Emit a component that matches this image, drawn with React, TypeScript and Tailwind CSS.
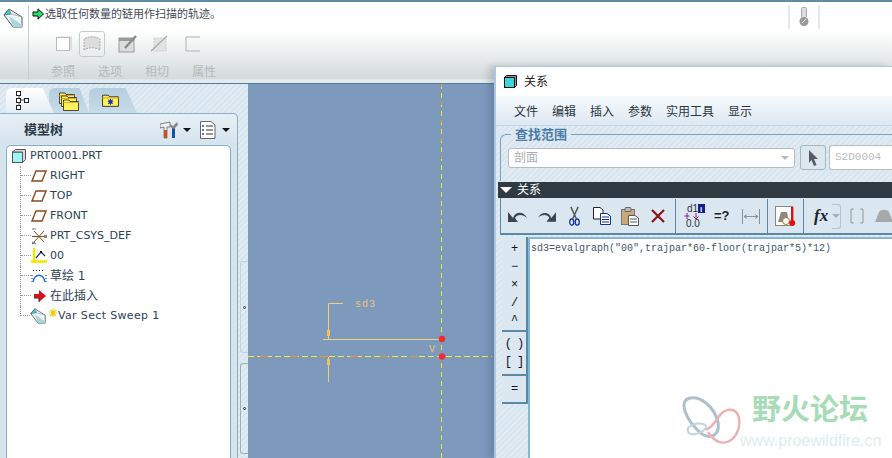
import React from 'react'

const cjk = "font-['Liberation_Sans','Noto_Sans_CJK_SC',sans-serif]"
const hatch = 'bg-[repeating-linear-gradient(135deg,#e0ebf3_0,#e0ebf3_2px,#d8e5ef_2px,#d8e5ef_4px)]'

const SweepIcon = ({ size = 20 }: { size?: number }) => (
  <svg width={size} height={size} viewBox="0 0 20 20">
    <path d="M1 7 L6 1 L19 9 V19 H10 Z" fill="#eef3f4" stroke="#3c4a50" strokeWidth="0.9" />
    <path d="M10 19 L6 8 L19 17 V19 Z" fill="#a6d6d8" />
    <path d="M1 7 L6 1 L8 6 Z" fill="#35d0d0" stroke="#3c4a50" strokeWidth="0.6" />
    <path d="M6 1 L8 6 L19 9" fill="none" stroke="#9aaab0" strokeWidth="0.8" />
  </svg>
)

const PlaneIcon = () => (
  <svg width="16" height="12" viewBox="0 0 16 12">
    <path d="M5 1 H15 L11 11 H1 Z" fill="none" stroke="#8a4a1e" strokeWidth="1.4" />
  </svg>
)

const CsysIcon = () => (
  <svg width="16" height="17" viewBox="0 0 16 17">
    <path d="M3 3 L13 14 M13 3 L3 14 M1 8.5 H13" stroke="#8a4a1e" strokeWidth="1" />
    <path d="M1 1 L5 1 M1 14 L5 16 M1 16 L4 14" stroke="#777" strokeWidth="1.1" />
    <rect x="13" y="7" width="3" height="3" fill="#888" />
  </svg>
)

const GraphIcon = () => (
  <svg width="16" height="16" viewBox="0 0 16 16">
    <path d="M3 0 V15 M0 13.5 H16" stroke="#f2e600" strokeWidth="2.4" />
    <path d="M5 10 L10 4 L14 8" fill="none" stroke="#15308e" strokeWidth="1.2" />
    <rect x="9" y="3" width="2" height="2" fill="#111" />
  </svg>
)

const SketchIcon = () => (
  <svg width="16" height="15" viewBox="0 0 16 15">
    <path d="M2 1.5 H14 M1 6 V14 M15 6 V14" stroke="#222" strokeWidth="1" strokeDasharray="1 2" />
    <path d="M2 13 C4 4 12 4 14 13" fill="none" stroke="#1673e6" strokeWidth="1.3" />
  </svg>
)

const InsertIcon = () => (
  <svg width="16" height="14" viewBox="0 0 16 14">
    <path d="M3 5 H8 V1 L15 7 L8 13 V9 H3 Z" fill="#d9101a" />
    <path d="M3 9 H8 V13" fill="none" stroke="#333" strokeWidth="1" />
  </svg>
)

const Row = ({ icon, label, last, className }: { icon: React.ReactNode; label: React.ReactNode; last?: boolean; className?: string }) => (
  <li className={`ml-[8px] flex h-5 items-center ${last ? '' : 'border-l border-dotted border-[#9a9a9a]'}`}>
    <span className={`mb-[10px] h-[10px] w-[10px] border-b border-dotted border-[#9a9a9a] ${last ? 'border-l' : ''}`} />
    <span className="flex w-[19px] items-center">{icon}</span>
    <span className={`whitespace-nowrap ${className ?? ''}`}>{label}</span>
  </li>
)

const TopBar = () => (
  <header className="flex h-[84px] border-t-2 border-b border-t-[#5f8ca3] border-b-[#4f7f96] bg-[linear-gradient(#ffffff_0,#ffffff_35%,#d3dada_95%,#e4ebee_96%)]">
    <div className="w-[28px] pt-[6px] pl-[3px]"><SweepIcon /></div>
    <div className="my-[3px] w-px bg-[#c8cfd0]" />
    <div className="flex flex-1 flex-col pl-[3px]">
      <div className="flex h-[24px] items-center gap-[1px]">
        <svg width="12" height="12" viewBox="0 0 12 12">
          <path d="M1 4 H6 V0.8 L11.5 6 L6 11.2 V8 H1 Z" fill="#22e070" stroke="#111" strokeWidth="1" />
        </svg>
        <span className="text-[11px] text-[#3f4a55]">选取任何数量的链用作扫描的轨迹。</span>
      </div>
      <div className="mt-[5px] flex h-[26px] items-center">
        <svg width="18" height="18" viewBox="0 0 18 18" className="ml-[23px]"><rect x="3" y="1.5" width="14" height="14" fill="#ddd" /><rect x="1.5" y="2.5" width="13" height="13" fill="#fff" stroke="#bbb" /></svg>
        <div className="ml-[6px] flex h-[26px] w-[26px] items-center justify-center rounded-[3px] border border-[#c4cbcd]">
          <svg width="18" height="16" viewBox="0 0 18 16"><path d="M1 14 V3 C6 0 12 0 17 3 V14 C12 11 6 11 1 14 Z" fill="#ddd" stroke="#aaa" strokeDasharray="2 1" /></svg>
        </div>
        <svg width="20" height="18" viewBox="0 0 20 18" className="ml-[13px]"><rect x="1" y="3" width="15" height="14" fill="#ddd" stroke="#999" /><rect x="1" y="3" width="15" height="3" fill="#999" /><path d="M7 13 L18 1" stroke="#8a8a8a" strokeWidth="2.4" /></svg>
        <svg width="18" height="18" viewBox="0 0 18 18" className="ml-[12px]"><rect x="4" y="3" width="12" height="13" fill="#e2e2e2" stroke="#ccc" strokeDasharray="2 1" /><path d="M1 16 L17 1" stroke="#a8a8a8" strokeWidth="1.2" /></svg>
        <svg width="16" height="16" viewBox="0 0 16 16" className="ml-[17px]"><path d="M15 1 H1 V15 H15" fill="none" stroke="#b0b0b0" /></svg>
      </div>
      <div className="mt-[7px] flex gap-[23px] pl-[19px] text-[12px] leading-[16px] text-[#b6babb]">
        <span>参照</span><span>选项</span><span>相切</span><span>属性</span>
      </div>
    </div>
    <div className="mt-[3px] mr-[72px] flex h-[24px] w-[32px] items-center justify-center border-x-2 border-[#e6e9e9]">
      <svg width="10" height="20" viewBox="0 0 10 20"><rect x="2.5" y="0.5" width="5" height="10" rx="1" fill="#ddd" stroke="#aaa" /><circle cx="5" cy="14.5" r="4.5" fill="#999" /><path d="M3 16 L7 12" stroke="#ddd" /></svg>
    </div>
  </header>
)

const Tab = ({ active, children, className }: { active?: boolean; children: React.ReactNode; className: string }) => (
  <div className={`flex h-[25px] items-center justify-center rounded-t-[6px] [clip-path:polygon(0_0,76%_0,100%_100%,0_100%)] ${active ? 'bg-[linear-gradient(#ffffff,#e4edf3)]' : 'bg-[linear-gradient(#b4cee0,#c8dbe8)]'} ${className}`}>
    {children}
  </div>
)

const Folder = ({ x = 0, y = 0, star }: { x?: number; y?: number; star?: boolean }) => (
  <g transform={`translate(${x} ${y})`}>
    <path d="M0.5 2 H6 L7 3.5 H15.5 V12.5 H0.5 Z" fill="#fff15a" stroke="#222" strokeWidth="0.8" />
    <path d="M0.5 4.5 H15.5" stroke="#e0b020" />
    {star && <path d="M8 5.5 V11 M5.5 8.2 H10.5 M6 6.2 L10 10.2 M10 6.2 L6 10.2" stroke="#1030c8" strokeWidth="1" />}
  </g>
)

const LeftPanel = () => (
  <aside className={`flex w-[248px] flex-col ${hatch}`}>
    <div className="flex pt-[4px] pl-[6px]">
      <Tab active className="relative z-10 w-[48px]">
        <svg width="14" height="19" viewBox="0 0 14 19" className="mr-[14px]">
          <path d="M3 2 V16 M3 9 H11" stroke="#555" />
          <rect x="0.5" y="0.5" width="4" height="4" fill="#fff" stroke="#222" /><rect x="0.5" y="7.5" width="4" height="4" fill="#fff" stroke="#222" /><rect x="0.5" y="14.5" width="4" height="4" fill="#fff" stroke="#222" /><rect x="8.5" y="7.5" width="4" height="4" fill="#fff" stroke="#222" />
        </svg>
      </Tab>
      <Tab className="-ml-[5px] w-[40px]">
        <svg width="20" height="20" viewBox="0 0 20 20"><Folder x={0} y={0} /><Folder x={2} y={3} /><Folder x={4} y={7} /></svg>
      </Tab>
      <Tab className="w-[48px]">
        <svg width="17" height="15" viewBox="0 0 16 14" className="mr-[5px]"><Folder star /></svg>
      </Tab>
    </div>
    <div className="flex flex-1 pr-[10px]">
      <div className="flex flex-1 flex-col rounded-tr-[5px] border-t border-r border-[#8fb0c2] bg-[linear-gradient(#e6eff5,#d6e4ee_30px)] px-[6px]">
        <div className="flex h-[31px] shrink-0 items-center">
          <span className="ml-[18px] text-[13px] font-bold text-[#2e3a44]">模型树</span>
          <svg width="19" height="18" viewBox="0 0 19 18" className="ml-[97px]">
            <path d="M0 3 L10 1 V6 H7 V17 H4 V6 L0 7 Z" fill="#f0f0f0" stroke="#555" strokeWidth="0.7" /><rect x="4" y="9" width="3" height="8" fill="#d05018" />
            <rect x="12" y="7" width="3" height="10" fill="#1a4fb0" /><path d="M10 3 L13 5 L17 1 L18 4 L14 8 L10 6 Z" fill="#888" />
          </svg>
          <span className="ml-[4px] h-0 w-0 border-x-[4px] border-t-[4px] border-x-transparent border-t-[#111]" />
          <svg width="16" height="18" viewBox="0 0 16 18" className="ml-[9px]">
            <path d="M0.5 0.5 H11 L15 4 V17.5 H0.5 Z" fill="#fff" stroke="#667" />
            <path d="M6 5 H13 M6 9 H13 M6 13 H13" stroke="#333" /><path d="M2 5 H4 M2 9 H4 M2 13 H4" stroke="#1a4fb0" strokeWidth="1.6" />
          </svg>
          <span className="ml-[6px] h-0 w-0 border-x-[4px] border-t-[4px] border-x-transparent border-t-[#111]" />
        </div>
        <div className="flex-1 rounded-t-[5px] border border-b-0 border-[#86aec4] bg-white pl-[5px] font-['DejaVu_Sans','Noto_Sans_CJK_SC',sans-serif] text-[11px] text-[#2b4257]">
          <ul>
            <li className="flex h-5 items-center">
              <svg width="14" height="14" viewBox="0 0 14 14" className="mr-[4px]"><rect x="0.5" y="3" width="10" height="10.5" fill="#9ff6f6" stroke="#555" /><path d="M0.5 3 L3.5 0.5 H13.5 V10.5 L10.5 13.5 V3 Z" fill="#d9dde0" stroke="#555" /></svg>
              PRT0001.PRT
            </li>
            <Row icon={<PlaneIcon />} label="RIGHT" />
            <Row icon={<PlaneIcon />} label="TOP" />
            <Row icon={<PlaneIcon />} label="FRONT" />
            <Row icon={<CsysIcon />} label="PRT_CSYS_DEF" />
            <Row icon={<GraphIcon />} label="00" />
            <Row icon={<SketchIcon />} label="草绘 1" className="text-[12px]" />
            <Row icon={<InsertIcon />} label="在此插入" className="text-[12px]" />
            <Row
              last
              icon={<SweepIcon size={16} />}
              label={
                <span className="flex items-center">
                  <svg width="9" height="9" viewBox="0 0 9 9" className="mb-[6px]"><path d="M4 0 V8 M0 4 H8 M1 1 L7 7 M7 1 L1 7" stroke="#e8d000" strokeWidth="1.2" /></svg>
                  <span className="tracking-[0.35px]">Var Sect Sweep 1</span>
                </span>
              }
            />
          </ul>
        </div>
      </div>
      <div className="-mr-[10px] flex w-[10px] shrink-0 flex-col gap-[10px] pt-[148px] pl-[2px]">
        <div className="flex h-[92px] items-center justify-center rounded-l-[3px] border-y border-l border-[#c5d3dc]"><span className="h-[3px] w-[3px] rounded-full border border-[#333]" /></div>
        <div className="flex h-[91px] items-center justify-center rounded-l-[3px] border-y border-l border-[#9fb0ba]"><span className="h-[3px] w-[3px] rounded-full border border-[#333]" /></div>
      </div>
    </div>
  </aside>
)

const Canvas = () => (
  <main className="flex-1 bg-[#7d9abd]">
    <svg width="247" height="374" viewBox="248 84 247 374" className="block font-['Liberation_Mono',monospace]">
      <path d="M441.5 84 V458" stroke="#f0e040" strokeDasharray="5 4" />
      <path d="M441.5 84 V160" stroke="#e89a3c" strokeDasharray="3 15" />
      <path d="M248 356.5 H492" stroke="#f5e93a" strokeWidth="1.2" strokeDasharray="6 3" />
      <path d="M260 356.5 H440" stroke="#e8923a" strokeWidth="1.2" strokeDasharray="8 22" />
      <path d="M323 339.5 H442 M328.5 339 V303.5 H343 M328.5 357 V382" stroke="#f2cf7e" fill="none" />
      <rect x="327" y="330" width="3" height="6" fill="#f2c060" />
      <rect x="327" y="359" width="3" height="6" fill="#f2c060" />
      <text x="355" y="307" fontSize="10" letterSpacing="1" fill="#eec070">sd3</text>
      <text x="429" y="352" fontSize="10" fill="#eec070">V</text>
      <circle cx="442" cy="339" r="3.2" fill="#f02c30" />
      <circle cx="442" cy="356.5" r="3.2" fill="#f02c30" />
    </svg>
  </main>
)

const RelationToolbar = () => (
  <div className="ml-[4px] flex h-[37px] items-center border-b-2 border-l border-[#5b89a3] bg-[#dae7f1] pt-[1px]">
    <div className="flex h-full w-[175px] items-center gap-[9px] border-r border-[#5b89a3] pl-[7px]">
      <svg width="20" height="14" viewBox="0 0 20 14"><path d="M5 9 C7 2 16 2 19 9 C15 5 9 5 7 9 L10 13 H0 V3 Z" fill="#3b4650" /></svg>
      <svg width="19" height="14" viewBox="0 0 20 14"><path d="M15 9 C13 2 4 2 1 9 C5 5 11 5 13 9 L10 13 H20 V3 Z" fill="#3b4650" /></svg>
      <svg width="11" height="21" viewBox="0 0 12 21" className="ml-[4px]"><path d="M2 0 L8 13 M10 0 L4 13" stroke="#555" strokeWidth="1.6" /><ellipse cx="3" cy="16.5" rx="2.2" ry="3.5" fill="none" stroke="#1030b0" strokeWidth="1.4" /><ellipse cx="9" cy="16.5" rx="2.2" ry="3.5" fill="none" stroke="#1030b0" strokeWidth="1.4" /></svg>
      <svg width="18" height="18" viewBox="0 0 18 18" className="ml-[4px]"><path d="M0.5 0.5 H7 L10 3 V12 H0.5 Z" fill="#fff" stroke="#222" /><path d="M7.5 6.5 H14 L17.5 9 V17.5 H7.5 Z" fill="#fff" stroke="#14308e" /><path d="M9 10 H16 M9 12.5 H16 M9 15 H16" stroke="#14308e" /></svg>
      <svg width="18" height="19" viewBox="0 0 18 19" className="ml-[1px]"><rect x="0.5" y="2.5" width="13" height="15" fill="#c8a878" stroke="#777" /><rect x="4" y="0.5" width="6" height="4" rx="1" fill="#bbb" stroke="#666" /><path d="M7.5 8.5 H14 L17.5 11 V18.5 H7.5 Z" fill="#fff" stroke="#555" /><path d="M9 12 H16 M9 15 H16" stroke="#555" /></svg>
      <svg width="14" height="14" viewBox="0 0 14 14" className="ml-[3px]"><path d="M1 1 L13 13 M13 1 L1 13" stroke="#8c1418" strokeWidth="2.2" /></svg>
    </div>
    <div className="flex h-full w-[92px] items-center border-r border-[#5b89a3] pl-[8px]">
      <svg width="21" height="24" viewBox="0 0 21 24" className="font-['Liberation_Sans',sans-serif]">
        <text x="3" y="8" fontSize="10" fill="#333">d1</text>
        <rect x="14" y="0" width="7" height="9" fill="#14208e" />
        <text x="16" y="8" fontSize="8" fontWeight="bold" fill="#fff">i</text>
        <path d="M3 9 V15 M0.5 12 H5.5 M12 9 V15 M9.5 12.5 L12 15 L14.5 12.5" stroke="#a010a0" fill="none" />
        <text x="2" y="23" fontSize="10" fill="#333">0.0</text>
      </svg>
      <span className={`ml-[9px] text-[13px] font-semibold text-[#222] ${cjk}`}>=?</span>
      <svg width="18" height="15" viewBox="0 0 18 15" className="ml-[12px]"><path d="M0.5 0 V15 M17.5 0 V15 M2 7.5 H16 M2 7.5 L5 5.5 M2 7.5 L5 9.5 M16 7.5 L13 5.5 M16 7.5 L13 9.5" stroke="#8a9298" fill="none" /></svg>
    </div>
    <div className="flex h-full w-[36px] items-center justify-center border-r border-[#5b89a3]">
      <svg width="21" height="21" viewBox="0 0 21 21"><rect x="0.5" y="0.5" width="17" height="19" fill="#fff" stroke="#888" /><path d="M3 16 L6 6 H12 L14 16 Z" fill="#8a8a8a" /><circle cx="11" cy="15" r="3.5" fill="#fff" stroke="#c07010" /><rect x="16" y="1" width="2.4" height="14" fill="#e01010" /><circle cx="17.2" cy="17" r="3" fill="#e01010" /></svg>
    </div>
    <div className="flex h-full flex-1 items-center overflow-hidden pl-[10px]">
      <span className="w-[18px] font-['Liberation_Serif',serif] text-[17px] font-bold text-[#222] italic">fx</span>
      <div className="ml-[4px] flex h-[25px] w-[17px] items-center justify-center rounded-r-[3px] border border-l-0 border-[#b8c2ca]">
        <span className="h-0 w-0 border-x-[4px] border-t-[4px] border-x-transparent border-t-[#a8b0b6]" />
      </div>
      <svg width="14" height="16" viewBox="0 0 14 16" className="ml-[9px] shrink-0"><path d="M3.5 1 H2 L1 2 V14 L2 15 H3.5 M10.5 1 H12 L13 2 V14 L12 15 H10.5" fill="none" stroke="#a0a8ae" strokeWidth="1.3" /></svg>
      <svg width="18" height="14" viewBox="0 0 18 14" className="ml-[11px] shrink-0"><path d="M0 13 L4 3 C6 0 12 0 14 3 L18 13 Z" fill="#a8a8a8" /></svg>
    </div>
  </div>
)

const Operator = ({ children }: { children: string }) => (
  <button className="flex h-[18px] w-full items-center justify-center font-['Liberation_Mono',monospace] text-[12px] leading-none font-medium tracking-[-1px] text-[#111]">
    {children}
  </button>
)

const OperatorBar = () => (
  <div className="ml-[6px] flex h-[167px] w-[26px] shrink-0 flex-col border-r-2 border-b-2 border-[#5b89a3] bg-[#dbe8f2]">
    <div className="h-[95px] border-b-2 border-[#5b89a3] pt-[3px]">
      <Operator>+</Operator><Operator>−</Operator><Operator>×</Operator><Operator>/</Operator><Operator>^</Operator>
    </div>
    <div className="h-[44px] border-b-2 border-[#5b89a3] pt-[3px]">
      <Operator>( )</Operator><Operator>[ ]</Operator>
    </div>
    <div className="flex flex-1 items-center"><Operator>=</Operator></div>
  </div>
)

const RelationsDialog = () => (
  <section className={`absolute top-[66px] left-[494px] flex h-[392px] w-[398px] flex-col border-t border-l-2 border-[#a9c8e4] shadow-[-5px_0_7px_rgba(40,60,90,0.22)] ${hatch}`}>
    <div className="flex h-[29px] shrink-0 items-center bg-white pl-[8px] text-[12px] text-[#222]">
      <svg width="13" height="13" viewBox="0 0 13 13" className="mr-[7px]"><rect x="0.5" y="2.5" width="10" height="10" fill="#39d5d8" stroke="#111" /><path d="M0.5 2.5 L2.5 0.5 H12.5 V10.5 L10.5 12.5 V2.5 Z" fill="#8a9a9a" stroke="#111" /></svg>
      关系
    </div>
    <nav className="flex h-[30px] shrink-0 items-center gap-[14px] border-b border-[#c2d6e4] bg-[linear-gradient(#f6fafd,#dde8f2)] pt-[3px] pl-[18px] text-[12px] text-[#2c3640]">
      <span>文件</span><span>编辑</span><span>插入</span><span>参数</span><span>实用工具</span><span>显示</span>
    </nav>
    <fieldset className="ml-[4px] h-[55px] shrink-0 rounded-tl-[6px] border-t border-l border-[#7da0bd] pl-[8px]">
      <legend className="ml-[2px] px-[4px] text-[13px] leading-[17px] font-bold text-[#4b7ba6]">查找范围</legend>
      <div className="flex items-center pt-[2px]">
        <div className="-ml-[1px] flex h-[20px] w-[287px] items-center justify-between rounded-[3px] border border-[#b5bec5] bg-white px-[5px] text-[12px] text-[#a8adb1]">
          剖面
          <span className="h-0 w-0 border-x-[4px] border-t-[4px] border-x-transparent border-t-[#b4bac0]" />
        </div>
        <div className="ml-[5px] flex h-[25px] w-[26px] items-center justify-center rounded-[3px] border border-[#aab6be] bg-[#dce7ef]">
          <svg width="10" height="16" viewBox="0 0 10 16"><path d="M1 0 L10 9 H6 L8.5 15 L6 16 L3.5 10 L1 13 Z" fill="#555c62" /></svg>
        </div>
        <div className="ml-[3px] flex h-[25px] flex-1 items-center rounded-l-[3px] border border-r-0 border-[#b5bec5] bg-white pl-[5px] font-['Liberation_Mono',monospace] text-[11px] text-[#b8bcbf]">
          S2D0004
        </div>
      </div>
    </fieldset>
    <div className="mt-[1px] ml-[2px] flex h-[16px] shrink-0 items-center bg-[#2f3a42] pl-[2px] text-[12px] text-white">
      <span className="mr-[5px] h-0 w-0 border-x-[6px] border-t-[6px] border-x-transparent border-t-white" />
      关系
    </div>
    <RelationToolbar />
    <div className="mt-[2px] flex min-h-0 flex-1">
      <OperatorBar />
      <div className="flex-1 rounded-tl-[2px] border-t-2 border-l-2 border-[#86b6d6] bg-white pt-[3px] pl-[1px] font-['Liberation_Mono',monospace] text-[10px] leading-[14px] whitespace-nowrap text-[#42576a]">
        {'sd3=evalgraph("00",trajpar*60-floor(trajpar*5)*12)'}
      </div>
    </div>
  </section>
)

const Watermark = () => (
  <div className="absolute top-[394px] left-[682px] flex">
    <svg width="60" height="56" viewBox="0 0 60 56">
      <path d="M8 4 C-4 6 3 26 20 40 C30 46 38 40 36 28 C32 12 18 2 8 4 Z" fill="none" stroke="#aebfd0" strokeWidth="3" />
      <path d="M26 38 C40 60 60 44 57 24 C54 12 42 14 36 24 C32 30 28 34 24 36" fill="none" stroke="#efb0b0" strokeWidth="2.4" />
      <path d="M6 34 C14 26 30 30 22 36 C14 42 4 42 6 34 Z" fill="none" stroke="#c6d2dc" strokeWidth="2" />
    </svg>
    <div className="ml-[10px] flex flex-col">
      <span className="text-[29px] leading-[32px] font-bold whitespace-nowrap text-[#a6dcb6]">野火论坛</span>
      <span className="mt-[6px] -ml-[12px] font-['Liberation_Sans',sans-serif] text-[16px] leading-[18px] whitespace-nowrap text-[#dceeec]">www.proewildfire.cn</span>
    </div>
  </div>
)

export default function App() {
  return (
    <div className={`relative flex h-[458px] w-[892px] flex-col overflow-hidden bg-white ${cjk}`}>
      <TopBar />
      <div className="flex min-h-0 flex-1">
        <LeftPanel />
        <Canvas />
      </div>
      <RelationsDialog />
      <Watermark />
    </div>
  )
}
